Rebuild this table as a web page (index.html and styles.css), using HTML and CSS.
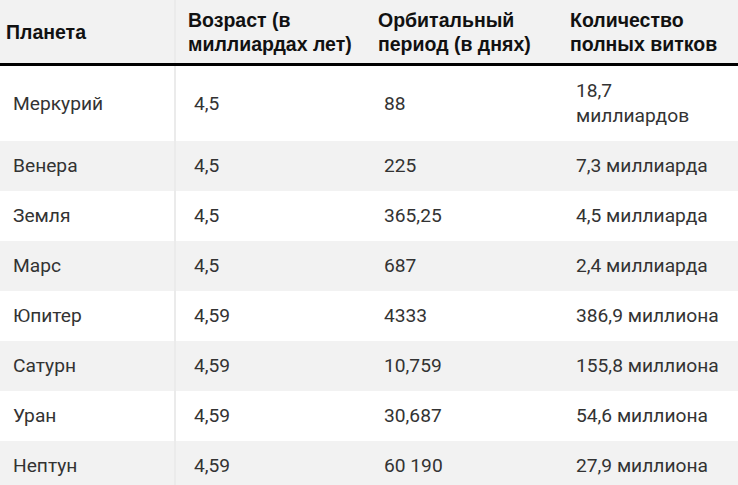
FILE: index.html
```html
<!DOCTYPE html>
<html lang="ru">
<head>
<meta charset="utf-8">
<title>Планеты</title>
<link rel="stylesheet" href="styles.css">
</head>
<body>
<table class="planets">
  <colgroup>
    <col class="c1"><col class="c2"><col class="c3"><col class="c4">
  </colgroup>
  <thead>
    <tr>
      <th>Планета</th>
      <th>Возраст (в миллиардах лет)</th>
      <th>Орбитальный период (в днях)</th>
      <th>Количество полных витков</th>
    </tr>
  </thead>
  <tbody>
    <tr><td>Меркурий</td><td>4,5</td><td>88</td><td>18,7 миллиардов</td></tr>
    <tr><td>Венера</td><td>4,5</td><td>225</td><td>7,3 миллиарда</td></tr>
    <tr><td>Земля</td><td>4,5</td><td>365,25</td><td>4,5 миллиарда</td></tr>
    <tr><td>Марс</td><td>4,5</td><td>687</td><td>2,4 миллиарда</td></tr>
    <tr><td>Юпитер</td><td>4,59</td><td>4333</td><td>386,9 миллиона</td></tr>
    <tr><td>Сатурн</td><td>4,59</td><td>10,759</td><td>155,8 миллиона</td></tr>
    <tr><td>Уран</td><td>4,59</td><td>30,687</td><td>54,6 миллиона</td></tr>
    <tr><td>Нептун</td><td>4,59</td><td>60 190</td><td>27,9 миллиона</td></tr>
  </tbody>
</table>
</body>
</html>
```
FILE: styles.css
```css
html, body {
  margin: 0;
  padding: 0;
  background: #ffffff;
}

.planets {
  width: 738px;
  table-layout: fixed;
  border-collapse: collapse;
  border-spacing: 0;
}

.c1 { width: 175px; }
.c2 { width: 191px; }
.c3 { width: 192px; }
.c4 { width: 180px; }

.planets th {
  background: #f2f2f2;
  color: #111111;
  font-family: "Liberation Sans", Arial, sans-serif;
  font-weight: bold;
  font-size: 19.5px;
  line-height: 24px;
  text-align: left;
  vertical-align: middle;
  padding: 8px 4px 7px 12px;
  border-bottom: 3px solid #000000;
}

.planets th:first-child {
  padding-left: 6px;
}

.planets td {
  color: #333333;
  font-family: Roboto, "Noto Sans", sans-serif;
  font-size: 19.2px;
  line-height: 25px;
  vertical-align: middle;
  padding: 12px 8px 13px 18px;
}

.planets td:last-child {
  padding-right: 10px;
}

.planets td:first-child {
  padding-left: 13px;
}

.planets th:first-child,
.planets td:first-child {
  border-right: 2px solid #ebebeb;
}

.planets tbody tr:nth-child(even) td {
  background: #f2f2f2;
}
```
